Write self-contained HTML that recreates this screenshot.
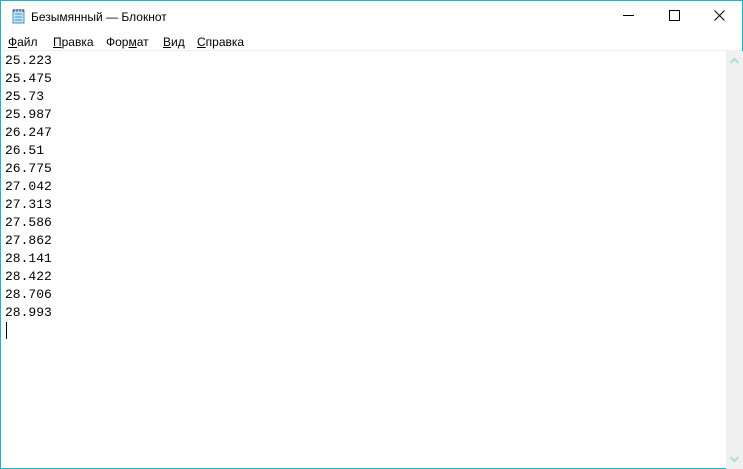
<!DOCTYPE html>
<html><head><meta charset="utf-8"><style>
*{margin:0;padding:0;box-sizing:border-box}
html,body{width:743px;height:469px;overflow:hidden;background:#fff}
.win{position:absolute;left:0;top:0;width:743px;height:469px;border:1px solid #18b4c8;background:#fff}
.title{position:absolute;left:0;top:0;width:741px;height:31px;font:12px "Liberation Sans","DejaVu Sans",sans-serif;color:#000}
.title .t{position:absolute;left:30px;top:9px}
.menu{position:absolute;left:0;top:31px;height:19px;width:741px;font:12px "Liberation Sans","DejaVu Sans",sans-serif}
.menu span{position:absolute;top:3px}
.sep{position:absolute;left:0;top:49px;width:741px;height:1px;background:#f0f0f0}
.edit{position:absolute;left:4px;top:51px;font:13px/18px "Liberation Mono",monospace;color:#000;white-space:pre}
.sb{position:absolute;left:725px;top:50px;width:17px;height:418px;background:#f0f0f0}
.cur{position:absolute;left:5px;top:321px;width:1px;height:17px;background:#000}
</style></head><body><div class="win">
<div class="title">
<svg style="position:absolute;left:9px;top:7px" width="16" height="16" viewBox="0 0 16 16"><rect x="3" y="2" width="11" height="13" fill="#bfe4f5" stroke="#4a8fc0"/><path d="M5 6h7M5 9h7M5 12h7" stroke="#4a8fc0"/><path d="M4 1v3M7 1v3M10 1v3M13 1v3" stroke="#555"/></svg>
<span class="t">Безымянный — Блокнот</span>
<svg style="position:absolute;left:622px;top:14px" width="12" height="2"><rect width="11" height="1" fill="#000"/></svg>
<svg style="position:absolute;left:668px;top:9px" width="12" height="12"><rect x="0.5" y="0.5" width="10" height="10" fill="none" stroke="#000"/></svg>
<svg style="position:absolute;left:713px;top:9px" width="12" height="12"><path d="M0.5 0.5L10.5 10.5M10.5 0.5L0.5 10.5" stroke="#000"/></svg>
</div>
<div class="menu"><span style="left:7px"><u>Ф</u>айл</span><span style="left:52px"><u>П</u>равка</span><span style="left:105px">Фор<u>м</u>ат</span><span style="left:162px"><u>В</u>ид</span><span style="left:196px"><u>С</u>правка</span></div>
<div class="sep"></div>
<div class="edit">25.223
25.475
25.73
25.987
26.247
26.51
26.775
27.042
27.313
27.586
27.862
28.141
28.422
28.706
28.993</div>
<div class="cur"></div>
<div class="sb">
<svg style="position:absolute;left:4px;top:7px" width="9" height="6"><path d="M0.5 5L4.5 1L8.5 5" stroke="#a6dfe6" stroke-width="2" fill="none"/></svg>
<svg style="position:absolute;left:4px;top:405px" width="9" height="6"><path d="M0.5 1L4.5 5L8.5 1" stroke="#a6dfe6" stroke-width="2" fill="none"/></svg>
</div>
</div></body></html>
